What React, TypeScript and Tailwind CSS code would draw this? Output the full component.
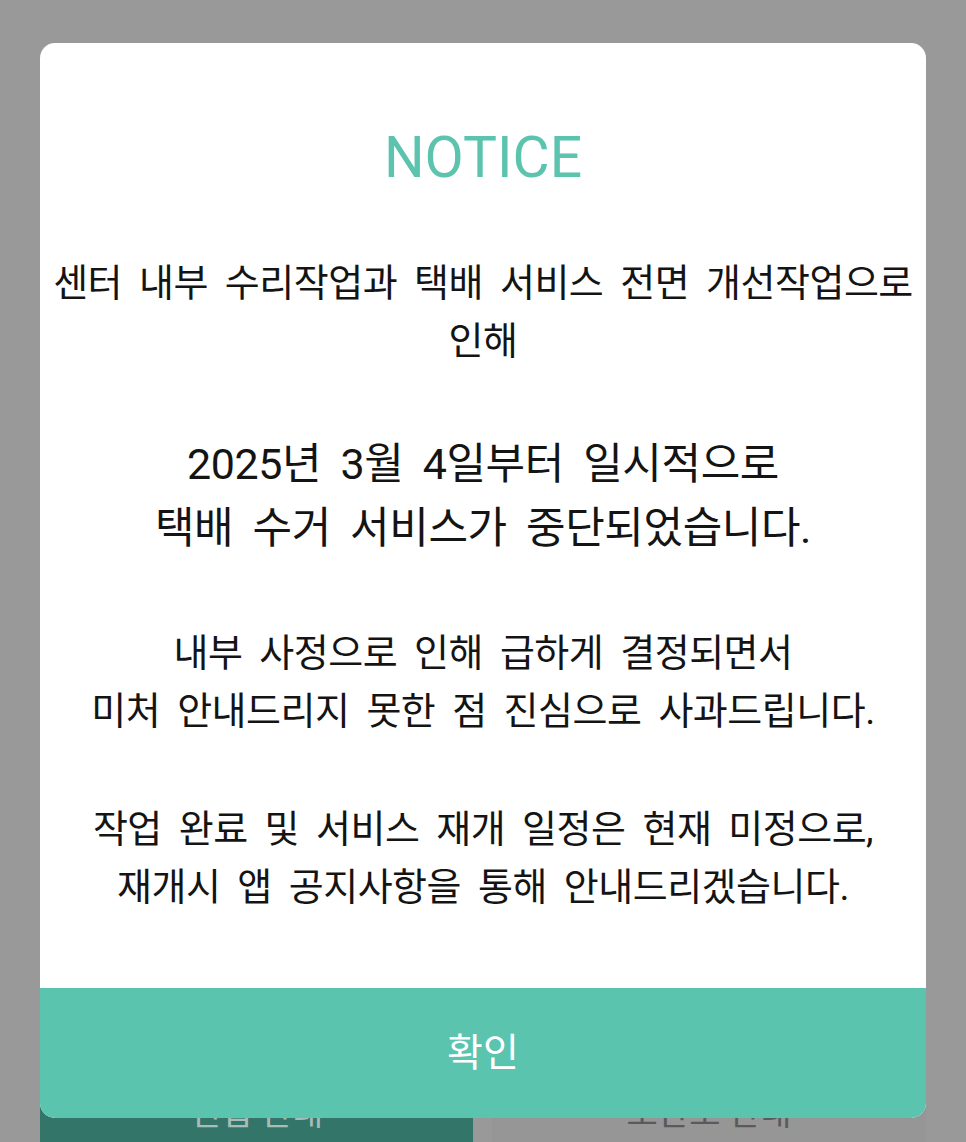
import React from 'react';

const bodyFont = { fontFamily: "Roboto, 'Noto Sans CJK KR', sans-serif" };

const paragraphs: { lines: string[]; big?: boolean; gap: string }[] = [
  { lines: ['센터 내부 수리작업과 택배 서비스 전면 개선작업으로', '인해'], gap: 'mt-[68px]' },
  { lines: ['2025년 3월 4일부터 일시적으로', '택배 수거 서비스가 중단되었습니다.'], big: true, gap: 'mt-[62px]' },
  { lines: ['내부 사정으로 인해 급하게 결정되면서', '미처 안내드리지 못한 점 진심으로 사과드립니다.'], gap: 'mt-[64px]' },
  { lines: ['작업 완료 및 서비스 재개 일정은 현재 미정으로,', '재개시 앱 공지사항을 통해 안내드리겠습니다.'], gap: 'mt-[60px]' },
];

export default function App() {
  return (
    <div className="relative flex h-[1142px] w-[966px] flex-col overflow-hidden bg-[#999999]" style={bodyFont}>
      {/* page behind the dim layer */}
      <div className="mt-auto flex h-[64px] px-[40px]">
        <div className="flex w-[433px] items-center justify-center bg-[#34756a] pt-[6px] text-[34px] text-[#a9bdb8]">
          전입 안내
        </div>
        <div className="ml-[19px] flex flex-1 items-center justify-center bg-[#969696] pt-[6px] text-[34px] text-[#5a5a5a]">
          보관소 안내
        </div>
      </div>

      {/* notice dialog */}
      <div className="absolute left-[40px] top-[43px] flex h-[1075px] w-[886px] flex-col overflow-hidden rounded-[15px] bg-white">
        <div className="flex-1 pt-[87px] text-center">
          <h1 className="text-[57px] leading-[56px] text-[#5bc3ae]" style={{ fontFamily: 'Roboto, sans-serif' }}>
            NOTICE
          </h1>
          {paragraphs.map((p, i) => (
            <p
              key={i}
              className={
                p.big
                  ? `${p.gap} text-[43px] leading-[64px] tracking-[-0.4px] text-[#141414] [word-spacing:9px]`
                  : `${p.gap} text-[38px] leading-[58px] tracking-[-0.5px] text-[#141414] [word-spacing:8px]`
              }
            >
              {p.lines[0]}
              <br />
              {p.lines[1]}
            </p>
          ))}
        </div>
        <button className="flex h-[130px] items-center justify-center bg-[#5bc4ae] text-[39px] text-white">
          확인
        </button>
      </div>
    </div>
  );
}
